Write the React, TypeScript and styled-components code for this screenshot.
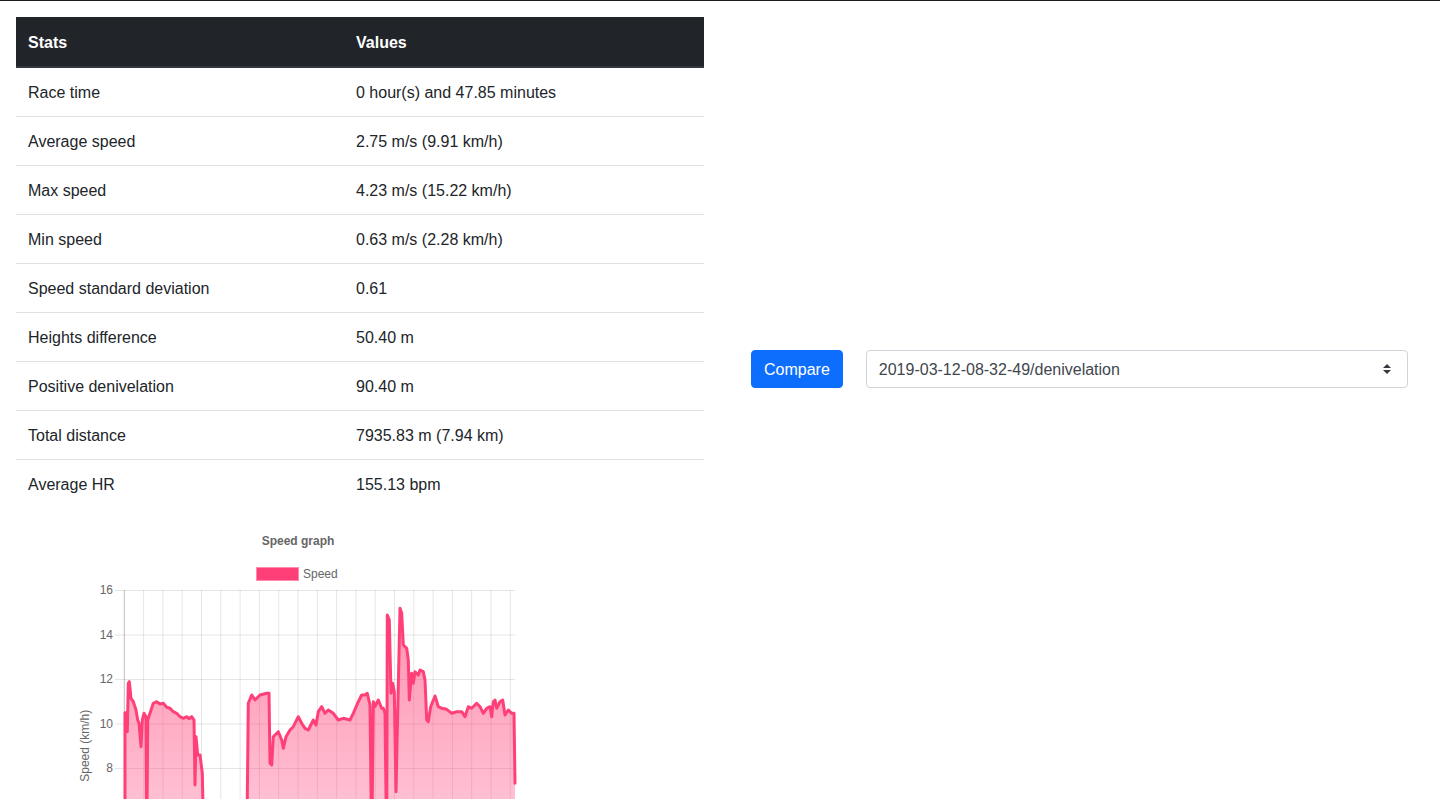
import React from "react";
import styled, { createGlobalStyle } from "styled-components";

const GlobalStyle = createGlobalStyle`
  html, body { margin: 0; padding: 0; background: #fff; }
  body {
    font-family: "Liberation Sans", Arial, sans-serif;
    font-size: 16px;
    line-height: 1.5;
    color: #212529;
    border-top: 1px solid #1b1b1b;
  }
  * { box-sizing: border-box; }
`;

const Page = styled.div`
  display: flex;
  align-items: flex-start;
  padding: 16px 32px 0 16px;
`;

const LeftColumn = styled.div`
  width: 688px;
  flex: none;
`;

const RightColumn = styled.div`
  flex: 1;
  margin-left: 47px;
  padding-top: 333px;
`;

const StatsTable = styled.table`
  width: 100%;
  border-collapse: collapse;
  margin-bottom: 17px;
`;

const HeadCell = styled.th<{ $first?: boolean }>`
  background: #212529;
  color: #fff;
  font-weight: 700;
  text-align: left;
  padding: 13px 12px 11px;
  border-top: 1px solid #212529;
  border-bottom: 2px solid #32383e;
  width: ${(p) => (p.$first ? "328px" : "auto")};
  box-sizing: border-box;
`;

const Cell = styled.td`
  padding: 13px 12px 11px;
  border-top: 1px solid #dee2e6;
  vertical-align: top;
`;

const Controls = styled.div`
  display: flex;
  align-items: center;
  gap: 23px;
`;

const CompareButton = styled.button`
  height: 38px;
  padding: 7px 12px 5px;
  border: 1px solid #0d6efd;
  border-radius: 4px;
  background: #0d6efd;
  color: #fff;
  font-family: "Liberation Sans", Arial, sans-serif;
  font-size: 16px;
  line-height: 24px;
  cursor: pointer;
`;

const SelectWrap = styled.div`
  position: relative;
  flex: 1;
`;

const Select = styled.select`
  width: 100%;
  height: 38px;
  padding: 7px 36px 5px 12px;
  border: 1px solid #ced4da;
  border-radius: 4px;
  background: #fff;
  color: #3f464d;
  font-family: "Liberation Sans", Arial, sans-serif;
  font-size: 16px;
  line-height: 24px;
  appearance: none;
  -webkit-appearance: none;
`;

const Caret = styled.svg`
  position: absolute;
  right: 17px;
  top: 14px;
  pointer-events: none;
`;

const ChartBox = styled.div`
  width: 564px;
  height: 400px;
`;

const rows: [string, string][] = [
  ["Race time", "0 hour(s) and 47.85 minutes"],
  ["Average speed", "2.75 m/s (9.91 km/h)"],
  ["Max speed", "4.23 m/s (15.22 km/h)"],
  ["Min speed", "0.63 m/s (2.28 km/h)"],
  ["Speed standard deviation", "0.61"],
  ["Heights difference", "50.40 m"],
  ["Positive denivelation", "90.40 m"],
  ["Total distance", "7935.83 m (7.94 km)"],
  ["Average HR", "155.13 bpm"],
];

const raw: [number, number][] = [
  [195, 1000], [195, 578], [200, 578], [202, 635], [205, 490], [208, 485], [213, 535], [220, 545],
  [228, 570], [233, 600], [237, 610], [243, 680], [247, 600], [252, 580], [258, 590], [260, 1000],
  [263, 600], [270, 580], [280, 550], [290, 545], [300, 552], [310, 550], [320, 562], [330, 565],
  [340, 575], [350, 580], [360, 590], [370, 595], [380, 590], [388, 596], [395, 590], [402, 600],
  [405, 795], [408, 650], [413, 705], [420, 705], [427, 760],
  [432, 1000], [500, 1040], [560, 1000], [565, 550], [575, 525], [585, 540], [600, 525], [620, 520],
  [627, 520], [630, 730], [635, 735], [640, 650], [655, 635], [665, 660], [670, 685], [678, 650],
  [690, 630], [700, 620], [715, 590], [725, 610], [735, 625], [745, 630], [760, 600], [768, 615], [775, 575],
  [785, 560], [795, 580], [805, 570], [820, 580], [835, 600], [850, 595], [870, 600], [880, 580],
  [895, 545], [905, 525], [915, 525], [922, 520], [930, 555], [935, 1000], [940, 545], [945, 560],
  [955, 540], [965, 565], [970, 565], [975, 580], [980, 1000], [982, 285], [988, 300], [993, 520],
  [998, 490], [1003, 515], [1008, 815], [1013, 580], [1020, 265], [1025, 280], [1030, 375], [1040, 385],
  [1045, 420], [1048, 540], [1055, 460], [1060, 490], [1065, 455], [1075, 465], [1080, 450], [1090, 455],
  [1095, 480], [1100, 600], [1105, 605], [1112, 560], [1125, 528], [1135, 560], [1145, 565], [1160, 568],
  [1175, 580], [1190, 575], [1205, 575], [1215, 590], [1225, 560], [1235, 565], [1250, 550], [1260, 560],
  [1270, 580], [1280, 565], [1290, 560], [1295, 590], [1300, 545], [1305, 540], [1310, 565], [1320, 545],
  [1328, 540], [1335, 585], [1345, 570], [1355, 580], [1362, 580], [1365, 790],
];

const PLOT_LEFT = 108;
const PLOT_RIGHT = 499;
const PLOT_TOP = 65;
const UNIT = 22.25;
const PLOT_BOTTOM = PLOT_TOP + 14 * UNIT;
const yOf = (v: number) => PLOT_TOP + (16 - v) * UNIT;

function SpeedChart() {
  const pts = raw.map(([zx, zy]) => [44 + zx / 3, Math.min(zy / 3 - 5, PLOT_BOTTOM)] as [number, number]);
  const line = pts.map(([x, y], i) => `${i ? "L" : "M"}${x.toFixed(1)} ${y.toFixed(1)}`).join(" ");
  const area = `${line} L${pts[pts.length - 1][0].toFixed(1)} ${PLOT_BOTTOM} L${pts[0][0].toFixed(1)} ${PLOT_BOTTOM} Z`;
  const gridTicks = [16, 14, 12, 10, 8, 6, 4, 2];
  const labelTicks = [16, 14, 12, 10, 8];
  const vLines = Array.from({ length: 21 }, (_, k) => PLOT_LEFT + 0.3 + k * 19.3);
  return (
    <svg width={564} height={400} viewBox="0 0 564 400">
      <defs>
        <linearGradient id="fillGrad" gradientUnits="userSpaceOnUse" x1="0" y1={PLOT_TOP} x2="0" y2={PLOT_BOTTOM}>
          <stop offset="0" stopColor="rgb(255,64,120)" stopOpacity="0.6" />
          <stop offset="1" stopColor="rgb(255,64,120)" stopOpacity="0.2" />
        </linearGradient>
      </defs>
      <text x={282} y={20} textAnchor="middle" fontFamily="Liberation Sans, Arial, sans-serif" fontSize="12" fontWeight="700" fill="#666">
        Speed graph
      </text>
      <rect x={240.5} y={42.5} width={42} height={13} fill="rgb(255,64,120)" stroke="rgba(255,140,170,1)" strokeWidth={1} />
      <text x={287} y={53} fontFamily="Liberation Sans, Arial, sans-serif" fontSize="12" fill="#666">
        Speed
      </text>
      {vLines.map((x, i) => (
        <line key={`v${i}`} x1={x} y1={PLOT_TOP} x2={x} y2={PLOT_BOTTOM + 9} stroke={i === 0 ? "rgba(0,0,0,0.25)" : "rgba(0,0,0,0.1)"} strokeWidth={1} />
      ))}
      {gridTicks.map((t) => (
        <line key={`h${t}`} x1={PLOT_LEFT - 9} y1={yOf(t) + 0.5} x2={PLOT_RIGHT} y2={yOf(t) + 0.5} stroke="rgba(0,0,0,0.1)" strokeWidth={1} />
      ))}
      {labelTicks.map((t) => (
        <text key={`l${t}`} x={PLOT_LEFT - 11} y={yOf(t) + 4} textAnchor="end" fontFamily="Liberation Sans, Arial, sans-serif" fontSize="12" fill="#666">
          {t}
        </text>
      ))}
      <text
        x={0}
        y={0}
        transform={`translate(73 ${(PLOT_TOP + PLOT_BOTTOM) / 2}) rotate(-90)`}
        textAnchor="middle"
        fontFamily="Liberation Sans, Arial, sans-serif"
        fontSize="12"
        fill="#666"
      >
        Speed (km/h)
      </text>
      <path d={area} fill="url(#fillGrad)" />
      <path d={line} fill="none" stroke="rgb(255,64,120)" strokeWidth={3} strokeLinejoin="round" strokeLinecap="round" />
    </svg>
  );
}

export default function App() {
  return (
    <>
      <GlobalStyle />
      <Page>
        <LeftColumn>
          <StatsTable>
            <thead>
              <tr>
                <HeadCell $first>Stats</HeadCell>
                <HeadCell>Values</HeadCell>
              </tr>
            </thead>
            <tbody>
              {rows.map(([k, v]) => (
                <tr key={k}>
                  <Cell>{k}</Cell>
                  <Cell>{v}</Cell>
                </tr>
              ))}
            </tbody>
          </StatsTable>
          <ChartBox>
            <SpeedChart />
          </ChartBox>
        </LeftColumn>
        <RightColumn>
          <Controls>
            <CompareButton>Compare</CompareButton>
            <SelectWrap>
              <Select defaultValue="2019-03-12-08-32-49/denivelation">
                <option>2019-03-12-08-32-49/denivelation</option>
              </Select>
              <Caret width="8" height="10" viewBox="0 0 8 10">
                <path d="M4 0 L8 4 L0 4 Z M0 6 L8 6 L4 10 Z" fill="#343a40" />
              </Caret>
            </SelectWrap>
          </Controls>
        </RightColumn>
      </Page>
    </>
  );
}
